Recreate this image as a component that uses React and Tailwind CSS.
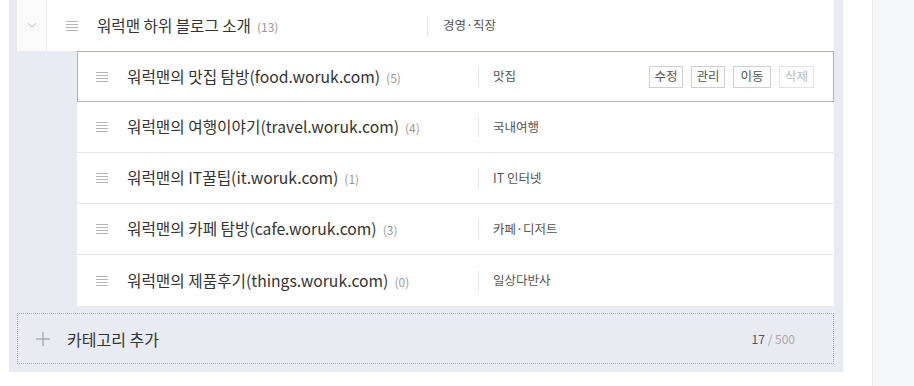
import React from 'react'

const children = [
  { name: '워럭맨의 맛집 탐방(food.woruk.com)', count: 5, topic: '맛집', active: true },
  { name: '워럭맨의 여행이야기(travel.woruk.com)', count: 4, topic: '국내여행' },
  { name: '워럭맨의 IT꿀팁(it.woruk.com)', count: 1, topic: 'IT 인터넷' },
  { name: '워럭맨의 카페 탐방(cafe.woruk.com)', count: 3, topic: '카페·디저트' },
  { name: '워럭맨의 제품후기(things.woruk.com)', count: 0, topic: '일상다반사' }
]

function Handle() {
  return (
    <svg width="12" height="10" viewBox="0 0 12 10" className="shrink-0">
      <g stroke="#b4b4b4" strokeWidth="1">
        <line x1="0" y1="0.5" x2="12" y2="0.5" />
        <line x1="0" y1="3.5" x2="12" y2="3.5" />
        <line x1="0" y1="6.5" x2="12" y2="6.5" />
        <line x1="0" y1="9.5" x2="12" y2="9.5" />
      </g>
    </svg>
  )
}

function ChildRow({ item, last }) {
  return (
    <div
      className={`flex items-center h-[51px] bg-white ${
        item.active ? 'border border-[#b0b3b8] -mt-px' : last ? '' : 'border-b border-[#e6e7ea]'
      } ${item.active ? 'pl-[18px]' : 'pl-[19px]'} pr-[19px]`}
    >
      <Handle />
      <div className="ml-[19px] w-[351px] flex items-baseline">
        <span className="text-[15.7px] text-[#333]">{item.name}</span>
        <span className="ml-[6px] text-[12px] text-[#999]">({item.count})</span>
      </div>
      <div className="w-px h-[20px] bg-[#e3e4e7]" />
      <span className="ml-[14px] text-[12.5px] text-[#555]">{item.topic}</span>
      {item.active && (
        <div className="ml-auto flex gap-[8px]">
          <span className="w-[34px] h-[22px] border border-[#cfd0d3] text-[12.5px] text-[#555] flex items-center justify-center leading-none">수정</span>
          <span className="w-[34px] h-[22px] border border-[#cfd0d3] text-[12.5px] text-[#555] flex items-center justify-center leading-none">관리</span>
          <span className="w-[38px] h-[22px] border border-[#cfd0d3] text-[12.5px] text-[#555] flex items-center justify-center leading-none">이동</span>
          <span className="w-[35px] h-[22px] border border-[#e3e4e6] text-[12.5px] text-[#bbb] flex items-center justify-center leading-none">삭제</span>
        </div>
      )}
    </div>
  )
}

export default function App() {
  return (
    <div className="flex w-full h-[386px] bg-white" style={{ fontFamily: '"Noto Sans CJK KR", "Noto Sans", sans-serif' }}>
      <div className="w-[872px] shrink-0 pl-[9px]">
        <div className="w-[834px] bg-[#e8ebf2] pl-[8px] pr-[9px] pb-[8px]">
          {/* parent category */}
          <div className="flex items-center h-[51px] bg-white">
            <div className="w-[30px] h-full bg-[#fbfbfc] border-r border-[#f1f2f4] flex items-center justify-center">
              <svg width="8" height="5" viewBox="0 0 8 5">
                <path d="M0.5 0.5 L4 4 L7.5 0.5" fill="none" stroke="#b5b5b5" strokeWidth="1" />
              </svg>
            </div>
            <div className="ml-[19px]"><Handle /></div>
            <div className="ml-[19px] w-[330px] flex items-baseline">
              <span className="text-[15.6px] text-[#333]">워럭맨 하위 블로그 소개</span>
              <span className="ml-[6px] text-[12px] text-[#999]">(13)</span>
            </div>
            <div className="w-px h-[20px] bg-[#e3e4e7]" />
            <span className="ml-[15px] text-[12.5px] text-[#555]">경영·직장</span>
          </div>

          {/* children */}
          <div className="ml-[60px] mt-px">
            {children.map((c, i) => (
              <ChildRow key={c.name} item={c} last={i === children.length - 1} />
            ))}
          </div>

          {/* add */}
          <div className="mt-[7px] h-[51px] border border-dotted border-[#a9acb2] flex items-center pl-[18px] pr-[38px]">
            <svg width="14" height="14" viewBox="0 0 14 14">
              <path d="M7 0 V14 M0 7 H14" stroke="#8e9094" strokeWidth="1" />
            </svg>
            <span className="ml-[17px] text-[16px] text-[#333]">카테고리 추가</span>
            <span className="ml-auto text-[12px] text-[#555]">
              17 <span className="text-[#aaa]">/ 500</span>
            </span>
          </div>
        </div>
      </div>
      <div className="flex-1 border-l border-[#e9eaed] bg-[#f5f6f8]" />
    </div>
  )
}
